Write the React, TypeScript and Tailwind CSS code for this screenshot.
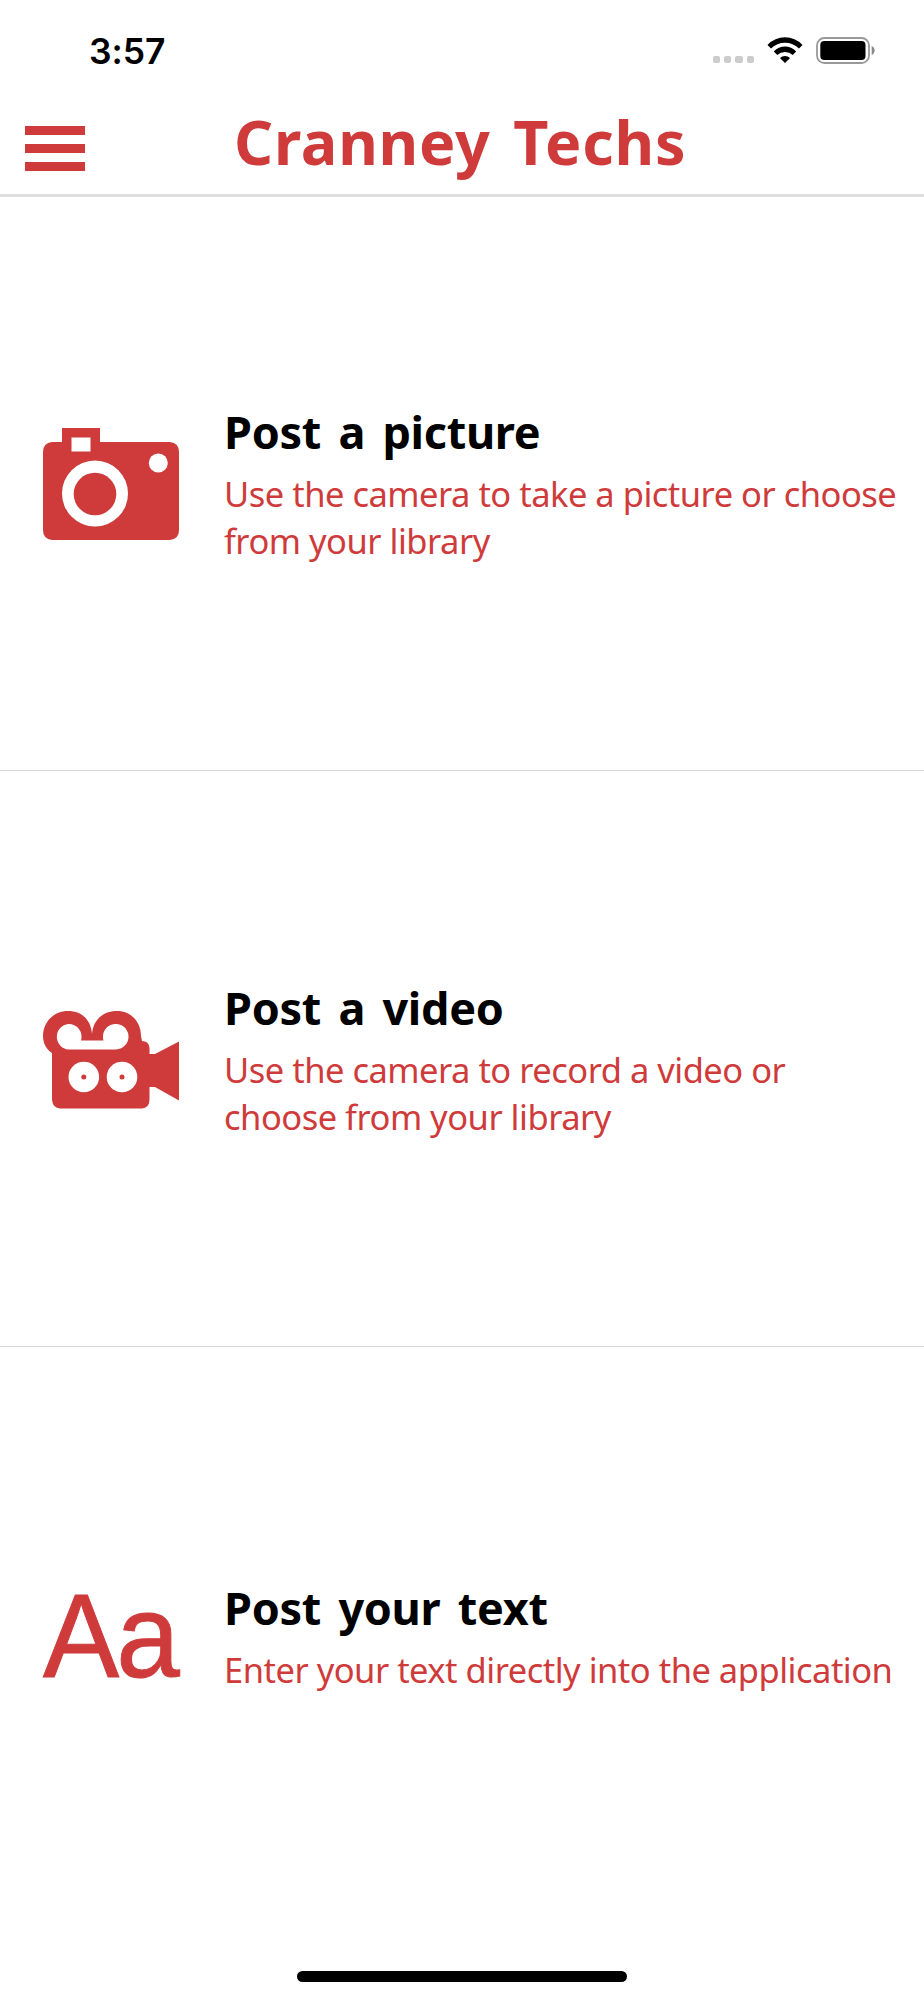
import type { ReactNode } from 'react';

function CameraIcon() {
  return (
    <svg className="block w-[136px] h-[112px]" viewBox="0 0 136 112">
      <path fill="#cf3b3b" d="M19 0H57V14H127Q136 15 136 24V102Q136 111 127 112H9Q0 111 0 102V24Q0 15 9 14H19Z" />
      <rect x="28.500" y="9.500" width="19" height="14" fill="#fff" />
      <circle cx="52" cy="65.500" r="33" fill="#fff" />
      <circle cx="52" cy="66" r="21.300" fill="#cf3b3b" />
      <circle cx="115.300" cy="35" r="9.500" fill="#fff" />
    </svg>
  );
}

function VideoIcon() {
  return (
    <svg className="block w-[136px] h-[98px]" viewBox="0 0 136 98">
      <path
        fill="#cf3b3b"
        d="M9 42C3 38 0 32 0 25C0 11 11 0 25 0C39 0 48 9 49 23C50 9 60 0 74 0C88 0 98 11 98 25L99 30Q106 30 106.500 37V43H112L136 30.500V89.500L112 76H106.500V89Q106 97 99 97.500H17Q10 97 9 89Z"
      />
      <path fill="#fff" d="M25.500 13A12.800 12.800 0 0 1 38 29.500H60.500A12.800 12.800 0 1 1 73 38.500H25.500A12.800 12.800 0 0 1 25.500 13Z" />
      <circle cx="40.800" cy="66" r="15.300" fill="#fff" />
      <circle cx="79" cy="66" r="15.300" fill="#fff" />
      <circle cx="40.800" cy="66" r="2.500" fill="#cf3b3b" />
      <circle cx="79" cy="66" r="2.500" fill="#cf3b3b" />
    </svg>
  );
}

function WifiIcon() {
  return (
    <svg className="block w-9 h-[27px]" viewBox="0 0 36 27">
      <path fill="#000" d="M.500 7.900Q8 .300 18 .300T35.500 7.900L32 11.400Q26 5.700 18 5.700T4 11.400ZM6.800 14.400Q11.500 9.500 18 9.500T29.200 14.400L25.700 17.900Q22.500 15 18 15T10.300 17.900ZM13 20.900Q15 19 18 19T23 20.900L18 26Z" />
    </svg>
  );
}

function BatteryIcon() {
  return (
    <svg className="block w-[60px] h-[27px]" viewBox="0 0 60 27">
      <rect x="1" y="1" width="52" height="25" rx="7.500" fill="none" stroke="#999" strokeWidth="1.800" />
      <rect x="4.300" y="4" width="45.200" height="19" rx="4" fill="#000" />
      <path d="M55.700 8.700Q58.700 10.500 58.700 13.500T55.700 18.300Z" fill="#888" />
    </svg>
  );
}

function Row({ icon, title, children }: { icon: ReactNode; title: string; children: ReactNode }) {
  return (
    <section className="flex h-[576px] items-center border-b border-[#dadada] last:border-b-0">
      <div className="ml-[43px] w-[181px] shrink-0 pt-[2px]">{icon}</div>
      <div className="whitespace-nowrap">
        <h2 className="mb-[8px] pt-px text-[45px] leading-[60px] font-bold tracking-[-0.3px] text-black [word-spacing:6px]">{title}</h2>
        <p className="text-[34.5px] leading-[47px] tracking-[-0.5px] text-[#cf3b3b]">{children}</p>
      </div>
    </section>
  );
}

export default function App() {
  return (
    <div className="flex h-[2000px] w-[924px] flex-col overflow-hidden bg-white font-['Noto_Sans',sans-serif]">
      <div className="flex h-[100px] shrink-0 items-start justify-between pr-[48px] pl-[89px]">
        <span className="mt-[30px] font-['Inter',sans-serif] text-[35.5px] leading-[44px] font-semibold tracking-[-0.1px]">3:57</span>
        <div className="mt-[37px] flex items-end">
          <div className="mr-[13px] mb-px flex gap-[4px]">
            {[0, 1, 2, 3].map((i) => (
              <i key={i} className="block h-[7px] w-[7.3px] rounded-[2px] bg-[#ccc]" />
            ))}
          </div>
          <WifiIcon />
          <div className="ml-[13px]">
            <BatteryIcon />
          </div>
        </div>
      </div>
      <header className="flex h-[97px] shrink-0 items-start border-b-[3px] border-[#dedede]">
        <button aria-label="Menu" className="mt-[26px] ml-[25px] flex w-[60px] flex-col gap-[9px]">
          <span className="block h-[9px] bg-[#cf3b3b]" />
          <span className="block h-[9px] bg-[#cf3b3b]" />
          <span className="block h-[9px] bg-[#cf3b3b]" />
        </button>
        <h1 className="ml-[149px] text-[61px] leading-[84px] font-bold tracking-[0.8px] whitespace-nowrap text-[#cf3b3b] [word-spacing:6px]">Cranney Techs</h1>
      </header>
      <main className="-mt-[2px]">
        <Row icon={<CameraIcon />} title="Post a picture">
          Use the camera to take a picture or choose
          <br />
          from your library
        </Row>
        <Row icon={<VideoIcon />} title="Post a video">
          Use the camera to record a video or
          <br />
          choose from your library
        </Row>
        <Row
          icon={
            <div className="origin-left scale-x-[0.96] font-['Liberation_Sans',sans-serif] text-[119px] leading-[130px] tracking-[-3px] text-[#cf3b3b] [-webkit-text-stroke:1px_#cf3b3b]">
              Aa
            </div>
          }
          title="Post your text"
        >
          Enter your text directly into the application
        </Row>
      </main>
      <div className="fixed bottom-[18px] left-[297px] h-[11px] w-[330px] rounded-full bg-black" />
    </div>
  );
}
